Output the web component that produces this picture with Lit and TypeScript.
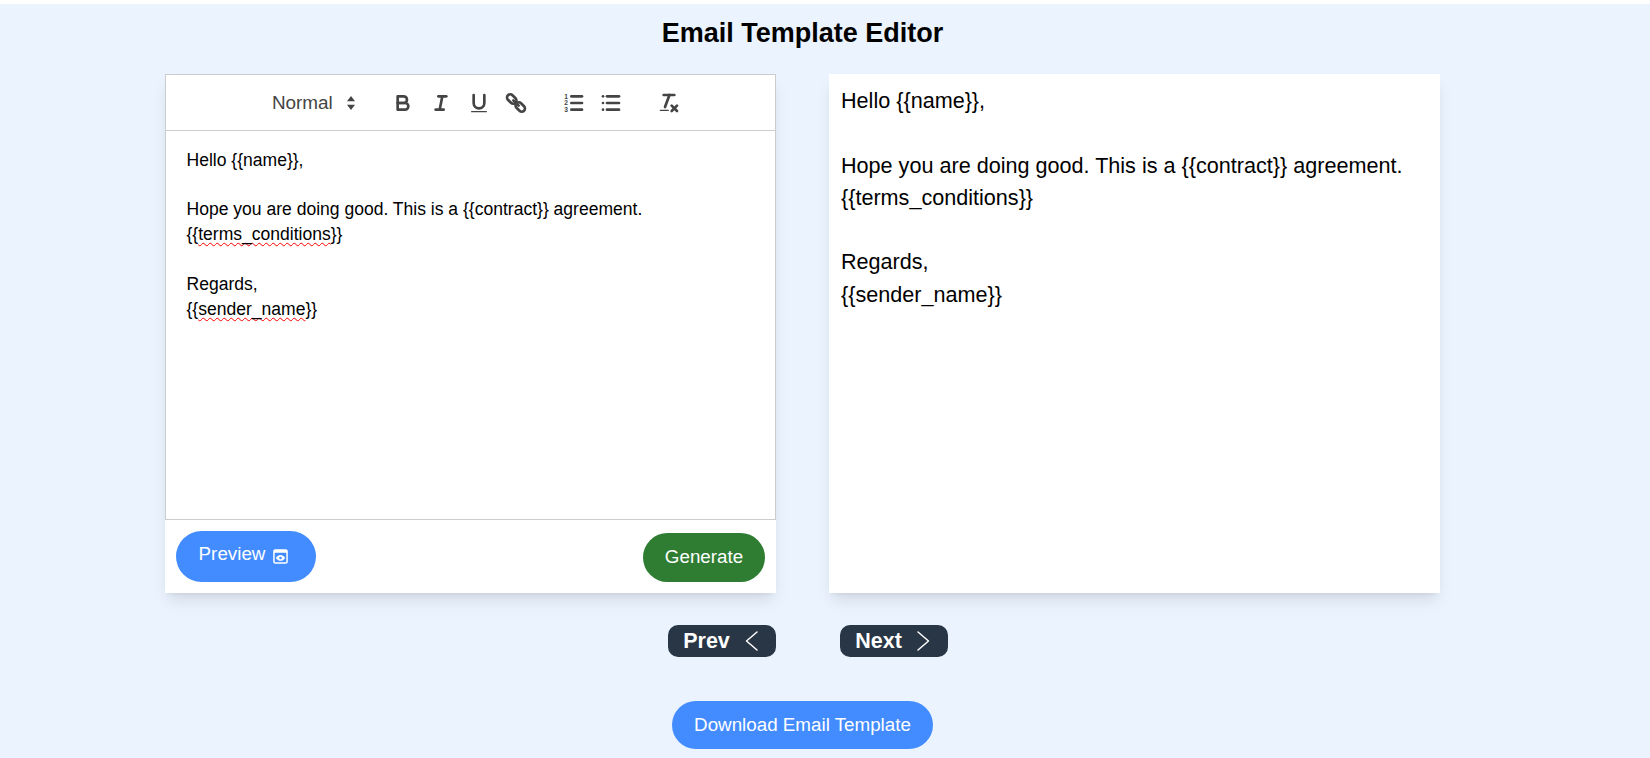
import { LitElement, html, css, svg } from 'lit';
import { customElement } from 'lit/decorators.js';

const icons = {
  bold: svg`<path class="s" d="M5,4H9.5A2.5,2.5,0,0,1,12,6.5v0A2.5,2.5,0,0,1,9.5,9H5V4Z"/><path class="s" d="M5,9h5.5A2.5,2.5,0,0,1,13,11.5v0A2.5,2.5,0,0,1,10.5,14H5V9Z"/>`,
  italic: svg`<line class="s" x1="7" x2="13" y1="4" y2="4"/><line class="s" x1="5" x2="11" y1="14" y2="14"/><line class="s" x1="8" x2="10" y1="14" y2="4"/>`,
  underline: svg`<path class="s" d="M5,3V9a4,4,0,0,0,4,4H9a4,4,0,0,0,4-4V3"/><rect class="f" x="3" y="15" width="12" height="1" rx=".5"/>`,
  link: svg`<line class="s" x1="7" x2="11" y1="7" y2="11"/><rect class="s" x="1.8" y="3.6" width="8" height="4.8" rx="2.4" transform="rotate(45 5.8 6)"/><rect class="s" x="8.2" y="9.6" width="8" height="4.8" rx="2.4" transform="rotate(45 12.2 12)"/>`,
  ordered: svg`<line class="s" x1="7" x2="15" y1="4" y2="4"/><line class="s" x1="7" x2="15" y1="9" y2="9"/><line class="s" x1="7" x2="15" y1="14" y2="14"/><text class="n" x="3" y="5.8">1</text><text class="n" x="3" y="10.8">2</text><text class="n" x="3" y="15.8">3</text>`,
  bullet: svg`<line class="s" x1="6" x2="15" y1="4" y2="4"/><line class="s" x1="6" x2="15" y1="9" y2="9"/><line class="s" x1="6" x2="15" y1="14" y2="14"/><line class="s" x1="3" x2="3" y1="4" y2="4"/><line class="s" x1="3" x2="3" y1="9" y2="9"/><line class="s" x1="3" x2="3" y1="14" y2="14"/>`,
  clean: svg`<line class="s" x1="5" x2="13" y1="3" y2="3"/><line class="s" x1="6" x2="9.35" y1="12" y2="3"/><line class="s" x1="11" x2="15" y1="11" y2="15"/><line class="s" x1="15" x2="11" y1="11" y2="15"/><rect class="f" x="2" y="14" width="7" height="1" rx=".5"/>`,
};

@customElement('app-root')
export class AppRoot extends LitElement {
  static styles = css`
    :host {
      display: block;
      height: 758px;
      overflow: hidden;
      box-sizing: border-box;
      padding-top: 4px;
      background: #fff;
      font-family: "Liberation Sans", Arial, sans-serif;
      color: #000;
    }
    .page {
      height: 754px;
      box-sizing: border-box;
      width: 100%;
      padding-right: 45px;
      background: #ebf3ff;
      display: flex;
      flex-direction: column;
      align-items: center;
    }
    h1 {
      margin: 0;
      padding-top: 13px;
      height: 58px;
      box-sizing: border-box;
      font-size: 27px;
      line-height: 32px;
      font-weight: 700;
    }
    .cards {
      display: flex;
      gap: 53px;
      margin-top: 12px;
    }
    .card {
      width: 611px;
      height: 519px;
      background: #fff;
      box-shadow: 0 10px 15px -3px rgba(0, 0, 0, .1), 0 4px 6px -4px rgba(0, 0, 0, .1);
      display: flex;
      flex-direction: column;
    }
    .toolbar {
      height: 57px;
      box-sizing: border-box;
      border: 1px solid #ccc;
      display: flex;
      justify-content: center;
      align-items: center;
      color: #444;
    }
    .picker {
      width: 112px;
      height: 32px;
      margin-right: 19px;
      display: flex;
      align-items: center;
      justify-content: space-between;
      box-sizing: border-box;
      padding: 0 2px 0 18.5px;
      font-size: 18.9px;
      font-weight: 400;
    }
    .group {
      display: flex;
      margin-right: 20px;
    }
    .group:last-child { margin-right: 0; }
    .tool {
      width: 37.6px;
      height: 32px;
      box-sizing: border-box;
      padding: 4px 7px;
      display: block;
    }
    .tool svg, .arrows svg {
      display: block;
      width: 24px;
      height: 24px;
    }
    .s {
      fill: none;
      stroke: #444;
      stroke-width: 2;
      stroke-linecap: round;
      stroke-linejoin: round;
    }
    .f { fill: #444; }
    .n {
      fill: #444;
      font-size: 5px;
      font-weight: 700;
      text-anchor: middle;
      font-family: "Liberation Sans", Arial, sans-serif;
    }
    .editor {
      height: 389px;
      box-sizing: border-box;
      border: 1px solid #ccc;
      border-top: 0;
      padding: 16.6px 20.5px;
      font-size: 17.55px;
      line-height: 24.85px;
      color: #000;
    }
    .editor p, .preview p { margin: 0; }
    .typo {
      text-decoration: underline wavy #f00;
      text-decoration-skip-ink: none;
      text-decoration-thickness: 1.4px;
      text-underline-offset: 2px;
    }
    .actions {
      flex: 1;
      display: flex;
      justify-content: space-between;
      align-items: flex-end;
      padding: 0 11px 11px;
    }
    button {
      border: 0;
      margin: 0;
      color: #fff;
      font-family: inherit;
      font-size: 18.8px;
      cursor: pointer;
    }
    .preview-btn {
      width: 140px;
      height: 51px;
      border-radius: 26px;
      background: #428cff;
      padding: 0 5px 6px 0;
      display: flex;
      align-items: center;
      justify-content: center;
      gap: 8px;
    }
    .preview-btn svg { width: 15px; height: 15px; margin-top: 5px; }
    .generate {
      width: 122px;
      height: 49px;
      border-radius: 25px;
      background: #2e7d32;
      padding: 0 0 1px;
    }
    .preview {
      padding: 11px 12px;
      font-size: 21.6px;
      line-height: 32.3px;
      box-sizing: border-box;
    }
    .pager {
      display: flex;
      gap: 64px;
      margin: 32px 0 0 10px;
    }
    .pager button {
      width: 108px;
      height: 32px;
      border-radius: 10px;
      background: #283645;
      font-weight: 700;
      font-size: 21.5px;
      display: flex;
      align-items: center;
      justify-content: center;
      gap: 13px;
      padding: 0;
    }
    .pager svg {
      width: 17px;
      height: 24px;
      fill: none;
      stroke: #fff;
      stroke-width: 1.5;
      stroke-linecap: round;
      stroke-linejoin: round;
    }
    .download {
      margin-top: 44px;
      width: 261px;
      height: 48px;
      border-radius: 24px;
      background: #428cff;
      padding: 0 0 1px;
    }
  `;

  private tool(d: unknown) {
    return html`<span class="tool"><svg viewBox="0 0 18 18">${d}</svg></span>`;
  }

  render() {
    return html`
      <div class="page">
        <h1>Email Template Editor</h1>
        <div class="cards">
          <section class="card">
            <div class="toolbar">
              <div class="picker arrows">
                <span>Normal</span>
                <svg viewBox="0 0 18 18">
                  <polygon class="f" points="6 7.6 9 3.8 12 7.6"/>
                  <polygon class="f" points="6 10.4 9 14.2 12 10.4"/>
                </svg>
              </div>
              <div class="group">
                ${this.tool(icons.bold)}${this.tool(icons.italic)}${this.tool(icons.underline)}${this.tool(icons.link)}
              </div>
              <div class="group">${this.tool(icons.ordered)}${this.tool(icons.bullet)}</div>
              <div class="group">${this.tool(icons.clean)}</div>
            </div>
            <div class="editor">
              <p>Hello {{name}},</p>
              <p><br /></p>
              <p>Hope you are doing good. This is a {{contract}} agreement.</p>
              <p>{{<span class="typo">terms_conditions</span>}}</p>
              <p><br /></p>
              <p>Regards,</p>
              <p>{{<span class="typo">sender_name</span>}}</p>
            </div>
            <div class="actions">
              <button class="preview-btn">
                Preview
                <svg viewBox="0 0 16 16">
                  <rect x="1" y="1" width="14" height="14" rx="1.5" fill="none" stroke="#fff" stroke-width="1.6"/>
                  <rect x="1" y="1" width="14" height="3" fill="#fff"/>
                  <path d="M3 9.5C4.600 7.300 6.200 6.400 8 6.400s3.400 .9 5 3.100C11.400 11.700 9.800 12.600 8 12.600S4.600 11.700 3 9.500Z" fill="#fff"/>
                  <circle cx="8" cy="9.500" r="1.300" fill="#428cff"/>
                </svg>
              </button>
              <button class="generate">Generate</button>
            </div>
          </section>
          <section class="card preview">
            <p>Hello {{name}},</p>
            <p><br /></p>
            <p>Hope you are doing good. This is a {{contract}} agreement.</p>
            <p>{{terms_conditions}}</p>
            <p><br /></p>
            <p>Regards,</p>
            <p>{{sender_name}}</p>
          </section>
        </div>
        <div class="pager">
          <button>Prev <svg viewBox="0 0 17 24"><path d="M14 3 3.500 12 14 21"/></svg></button>
          <button>Next <svg viewBox="0 0 17 24"><path d="M3 3l10.500 9L3 21"/></svg></button>
        </div>
        <button class="download">Download Email Template</button>
      </div>
    `;
  }
}
